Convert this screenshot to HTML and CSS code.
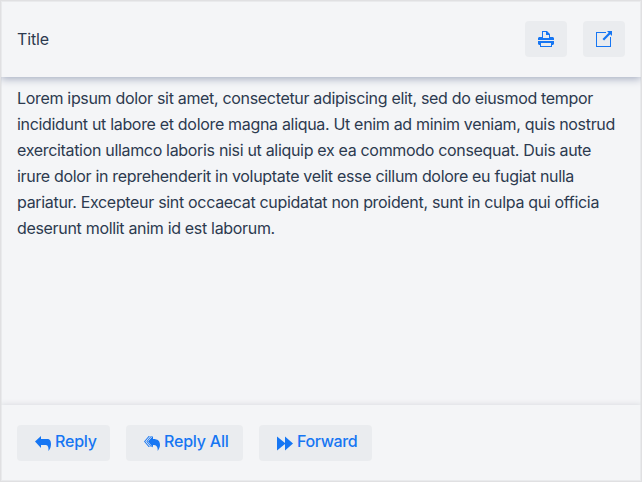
FILE: index.html
```html
<!DOCTYPE html>
<html lang="en">
<head>
<meta charset="utf-8">
<title>Title</title>
<link rel="stylesheet" href="styles.css">
</head>
<body>
<main class="panel">
<header class="header">
<h2 class="title">Title</h2>
<div class="actions">
<button class="btn icon-only" aria-label="Print"><svg class="icon" viewBox="0 0 16 16"><path fill-rule="evenodd" d="M4 0h5l3 3v5H4zM5 1v6h6V4H8V1z"/><path d="M1 6h3v1h8V6h3l1 1v2H0V7zM0 10h16v3l-1 1h-1v-2H2v2H1l-1-1z"/><path fill-rule="evenodd" d="M2 11h12v5H2zm1 1v3h10v-3z"/></svg></button>
<button class="btn icon-only" aria-label="Open"><svg class="icon" viewBox="0 0 16 16"><path d="M14 6v9H1V2h9V1H0v15h15V6z"/><path d="M16 0h-5l1.700 1.700L6.500 7.900l1.600 1.600 6.200-6.200L16 5z"/></svg></button>
</div>
</header>
<section class="content"><p>Lorem ipsum dolor sit amet, consectetur adipiscing elit, sed do eiusmod tempor incididunt ut labore et dolore magna aliqua. Ut enim ad minim veniam, quis nostrud exercitation ullamco laboris nisi ut aliquip ex ea commodo consequat. Duis aute irure dolor in reprehenderit in voluptate velit esse cillum dolore eu fugiat nulla pariatur. Excepteur sint occaecat cupidatat non proident, sunt in culpa qui officia deserunt mollit anim id est laborum.</p></section>
<footer class="footer">
<button class="btn reply"><svg class="icon" viewBox="0 0 16 16"><path d="M0 6.500L6 1v3h6c3 0 4 2 4 5 0 3-1 5-2.500 7 .3-5-1-6-3.500-6H6v3z"/></svg><span>Reply</span></button>
<button class="btn reply-all"><svg class="icon" viewBox="0 0 16 16"><path d="M4 6.500L9 1v3c5 0 7 2 7 6 0 2-1 4-2.300 6 .2-5-1.700-6-4.700-6v2.500z"/><path d="M4.700 1L0 6.500 4.700 12h1.200L1.200 6.500 5.900 1zM7 1L2.300 6.500 7 12h1L3.400 6.500 8 1z"/></svg><span>Reply All</span></button>
<button class="btn forward"><svg class="icon" viewBox="0 0 16 16"><path d="M0 1.500L8 8v-6.500L16 8.500 8 15.500V9L0 15.500z"/></svg><span>Forward</span></button>
</footer>
</main>
</body>
</html>
```
FILE: styles.css
```css
*{box-sizing:border-box}
body{margin:0;font-family:Inter,sans-serif;font-size:16px;line-height:26px;color:#2c3a4f;background:#f4f5f7}
.panel{height:482px;border:1.500px solid #e0e0e2;box-shadow:inset 0 0 0 1px #e9eaec;display:flex;flex-direction:column;overflow:hidden}
.header{height:76px;flex:none;padding:0 16px;display:flex;align-items:center;justify-content:space-between;box-shadow:0 2px 8px #a5adc0;clip-path:inset(0 0 -14px 0)}
.title{margin:0;font-size:16px;font-weight:400;letter-spacing:-.15px}
.actions,.footer{display:flex;gap:16px}
.content{flex:1;padding:8px 16px}
.content p{margin:0;letter-spacing:-.32px}
.footer{height:76px;flex:none;padding:0 16px;align-items:center;box-shadow:0 -1px 5px #dcdde2;clip-path:inset(-8px 0 0 0)}
.btn{height:36px;border:0;border-radius:4px;background:#eaecef;color:#1676f3;font:500 16px/24px Inter,sans-serif;letter-spacing:-.2px;display:flex;align-items:center;justify-content:flex-start;gap:4px;padding:0 0 0 18px;white-space:nowrap}
.btn span{margin-top:-4px}
.icon-only{width:42px;padding:0;justify-content:center}
.reply{width:93px}
.reply-all{width:117px}
.forward{width:113px;letter-spacing:-.4px}
.icon{width:16px;height:16px;flex:none;fill:currentColor}
```
